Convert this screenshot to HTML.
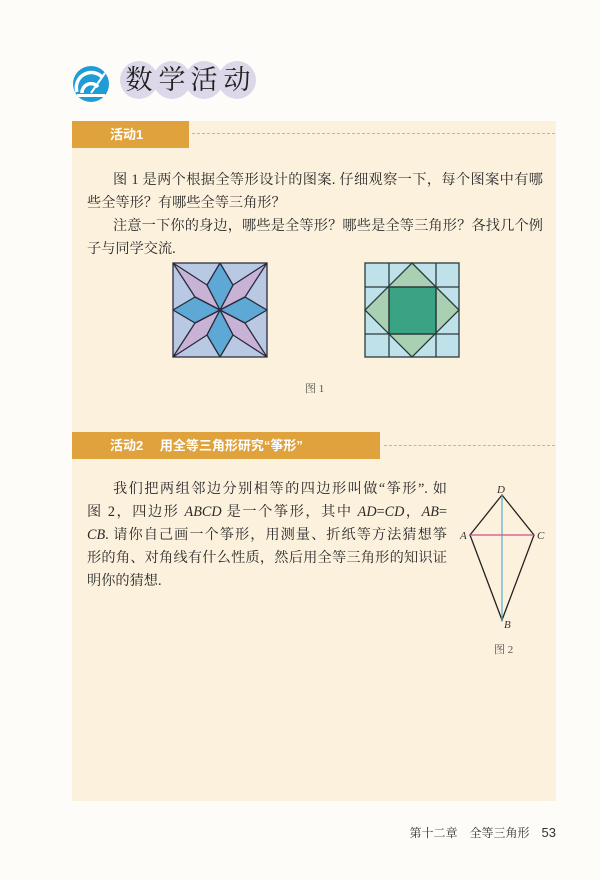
<!DOCTYPE html>
<html><head><meta charset="utf-8"><style>
body{margin:0;width:600px;height:880px;background:#fdfcf9;position:relative;overflow:hidden;font-family:"Liberation Serif","Noto Serif CJK SC",serif;color:#2a2a2a}
.abs{position:absolute}
.panel{left:72px;top:121px;width:484px;height:680px;background:#fcf1dd}
.bar{background:#e0a23c;color:#fff;font-family:"Liberation Sans","Noto Sans CJK SC",sans-serif;font-weight:bold;font-size:13px;line-height:27px;height:27px}
.dash{border-top:1.5px dashed #e4b060;height:0}
.l{font-size:14.2px;line-height:23px;height:23px;white-space:nowrap;text-align:justify;text-align-last:justify;overflow:visible}
.s{text-align-last:left}
.ind{margin-left:26px}
.circ{width:38px;height:38px;border-radius:50%;background:#dcd8ea;top:61px;font-size:27px;line-height:38px;text-align:center;color:#222}
i{font-family:"Liberation Serif",serif}
</style></head><body>
<svg class="abs" style="left:72px;top:65px" width="38" height="38" viewBox="0 0 38 38">
<circle cx="19" cy="19" r="18" fill="#1f9bd6"/>
<path d="M5 27 A15 15 0 0 1 30 12" stroke="#fff" stroke-width="3.5" fill="none"/>
<path d="M10 28 A9 9 0 0 1 26 22" stroke="#fff" stroke-width="3.5" fill="none"/>
<path d="M19 28 L33 8" stroke="#fff" stroke-width="2"/>
<rect x="5" y="29" width="28" height="3" fill="#fff"/>
</svg>
<div class="abs circ" style="left:120px">数</div>
<div class="abs circ" style="left:153px">学</div>
<div class="abs circ" style="left:185px">活</div>
<div class="abs circ" style="left:218px">动</div>
<div class="abs panel"></div>
<div class="abs bar" style="left:72px;top:121px;width:117px;text-indent:38px">活动1</div>
<div class="abs dash" style="left:192px;top:133px;width:363px"></div>
<div class="abs" style="left:87px;top:169px;width:456px">
<div class="l ind">图 1 是两个根据全等形设计的图案. 仔细观察一下，每个图案中有哪</div>
<div class="l s">些全等形？有哪些全等三角形？</div>
<div class="l ind">注意一下你的身边，哪些是全等形？哪些是全等三角形？各找几个例</div>
<div class="l s">子与同学交流.</div>
</div>
<svg class="abs" style="left:172px;top:260px" width="96" height="100" viewBox="-1 -1 96 96">
<g stroke="#2a2a3a" stroke-width="1.3" stroke-linejoin="round">
<rect x="0" y="0" width="94" height="94" fill="#b9c9e4"/>
<path d="M0 0L34 22L47 47L22 34Z M94 0L72 34L47 47L60 22Z M94 94L60 72L47 47L72 60Z M0 94L22 60L47 47L34 72Z" fill="#c8b3d6"/>
<path d="M47 0L60 22L47 47L34 22Z M94 47L72 60L47 47L72 34Z M47 94L34 72L47 47L60 72Z M0 47L22 34L47 47L22 60Z" fill="#5da8d4"/>
</g></svg>
<svg class="abs" style="left:364px;top:260px" width="96" height="100" viewBox="-1 -1 96 96">
<g stroke="#2a3a3a" stroke-width="1.3">
<rect x="0" y="0" width="94" height="94" fill="#bfe2ea"/>
<path d="M47 0L94 47L47 94L0 47Z" fill="#a9d0b2"/>
<rect x="24" y="24" width="47" height="47" fill="#3aa383"/>
<path d="M24 0V94M71 0V94M0 24H94M0 71H94" fill="none"/>
</g></svg>
<div class="abs" style="left:305px;top:380px;font-size:11px;color:#555">图 1</div>
<div class="abs bar" style="left:72px;top:432px;width:308px;text-indent:38px">活动2　 用全等三角形研究“筝形”</div>
<div class="abs dash" style="left:384px;top:445px;width:171px"></div>
<div class="abs" style="left:87px;top:478px;width:360px">
<div class="l ind">我们把两组邻边分别相等的四边形叫做“筝形”. 如</div>
<div class="l">图 2，四边形 <i>ABCD</i> 是一个筝形，其中 <i>AD</i>=<i>CD</i>，<i>AB</i>=</div>
<div class="l"><i>CB</i>. 请你自己画一个筝形，用测量、折纸等方法猜想筝</div>
<div class="l">形的角、对角线有什么性质，然后用全等三角形的知识证</div>
<div class="l s">明你的猜想.</div>
</div>
<svg class="abs" style="left:455px;top:480px" width="100" height="180" viewBox="455 480 100 180">
<path d="M502 495L534 535L502 620L470 535Z" fill="none" stroke="#222" stroke-width="1.3"/>
<line x1="502" y1="495" x2="502" y2="620" stroke="#5ab0c8" stroke-width="1.2"/>
<line x1="470" y1="535" x2="534" y2="535" stroke="#d0508a" stroke-width="1.3"/>
<g font-family="Liberation Serif" font-style="italic" font-size="11" fill="#333">
<text x="497" y="493">D</text><text x="460" y="539">A</text><text x="537" y="539">C</text><text x="504" y="628">B</text>
</g>
<text x="494" y="653" font-size="11" fill="#555" font-family="Liberation Serif, Noto Serif CJK SC, serif">图 2</text>
</svg>
<div class="abs" style="right:44px;top:824px;font-size:12px;color:#333;font-family:'Liberation Serif','Noto Serif CJK SC',serif">第十二章　全等三角形　<span style="font-family:'Liberation Sans',sans-serif;font-size:13px">53</span></div>
</body></html>
